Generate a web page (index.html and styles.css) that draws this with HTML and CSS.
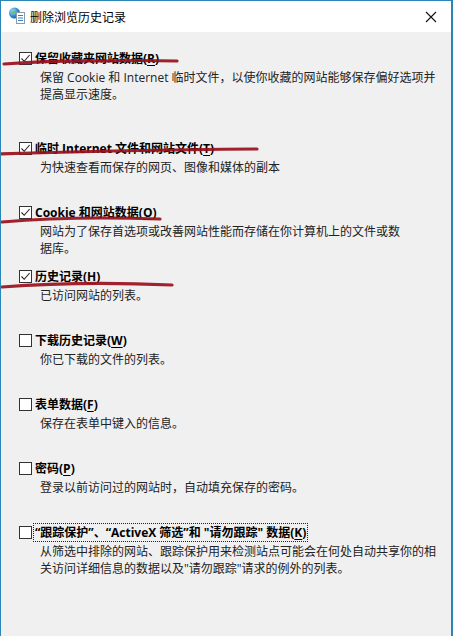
FILE: index.html
```html
<!DOCTYPE html>
<html lang="zh-CN">
<head>
<meta charset="utf-8">
<title>删除浏览历史记录</title>
<link rel="stylesheet" href="styles.css">
</head>
<body>
<div class="window">
  <div class="titlebar">
    <svg class="app-icon" width="18" height="20" viewBox="0 0 18 20">
      <defs>
        <radialGradient id="g" cx="0.35" cy="0.35" r="0.7">
          <stop offset="0" stop-color="#bfe6ff"/>
          <stop offset="0.6" stop-color="#2f8fd6"/>
          <stop offset="1" stop-color="#1b5f9e"/>
        </radialGradient>
      </defs>
      <circle cx="6.5" cy="7" r="5.5" fill="url(#g)"/>
      <path d="M3 5.5 Q6 3.5 9 6 Q7 8 4.5 8 Z" fill="#5fbf5a" opacity="0.85"/>
      <rect x="8.5" y="6.5" width="8" height="11" fill="#fff" stroke="#8a9aa8" stroke-width="1"/>
      <line x1="10" y1="9.5" x2="15" y2="9.5" stroke="#3b7fc4" stroke-width="1"/>
      <line x1="10" y1="12" x2="15" y2="12" stroke="#3b7fc4" stroke-width="1"/>
      <line x1="10" y1="14.5" x2="15" y2="14.5" stroke="#3b7fc4" stroke-width="1"/>
    </svg>
    <span class="title">删除浏览历史记录</span>
    <span class="close">
      <svg width="12" height="12" viewBox="0 0 12 12"><path d="M1 1 L11 11 M11 1 L1 11" stroke="#111" stroke-width="1.1" fill="none"/></svg>
    </span>
  </div>

  <div class="content">
    <div class="item first">
      <div class="head"><span class="box"><svg width="11" height="11" viewBox="0 0 11 11"><path d="M1.5 5.5 L4.2 8.3 L9.6 2" stroke="#222" stroke-width="1.1" fill="none"/></svg></span><span class="label">保留收藏夹网站数据(<u>R</u>)</span></div>
      <p class="desc">保留 Cookie 和 Internet 临时文件，以使你收藏的网站能够保存偏好选项并<br>提高显示速度。</p>
    </div>
    <div class="item">
      <div class="head"><span class="box"><svg width="11" height="11" viewBox="0 0 11 11"><path d="M1.5 5.5 L4.2 8.3 L9.6 2" stroke="#222" stroke-width="1.1" fill="none"/></svg></span><span class="label">临时 Internet 文件和网站文件(<u>T</u>)</span></div>
      <p class="desc">为快速查看而保存的网页、图像和媒体的副本</p>
    </div>
    <div class="item">
      <div class="head"><span class="box"><svg width="11" height="11" viewBox="0 0 11 11"><path d="M1.5 5.5 L4.2 8.3 L9.6 2" stroke="#222" stroke-width="1.1" fill="none"/></svg></span><span class="label">Cookie 和网站数据(<u>O</u>)</span></div>
      <p class="desc">网站为了保存首选项或改善网站性能而存储在你计算机上的文件或数<br>据库。</p>
    </div>
    <div class="item">
      <div class="head"><span class="box"><svg width="11" height="11" viewBox="0 0 11 11"><path d="M1.5 5.5 L4.2 8.3 L9.6 2" stroke="#222" stroke-width="1.1" fill="none"/></svg></span><span class="label">历史记录(<u>H</u>)</span></div>
      <p class="desc">已访问网站的列表。</p>
    </div>
    <div class="item">
      <div class="head"><span class="box"></span><span class="label">下载历史记录(<u>W</u>)</span></div>
      <p class="desc">你已下载的文件的列表。</p>
    </div>
    <div class="item">
      <div class="head"><span class="box"></span><span class="label">表单数据(<u>F</u>)</span></div>
      <p class="desc">保存在表单中键入的信息。</p>
    </div>
    <div class="item">
      <div class="head"><span class="box"></span><span class="label">密码(<u>P</u>)</span></div>
      <p class="desc">登录以前访问过的网站时，自动填充保存的密码。</p>
    </div>
    <div class="item">
      <div class="head"><span class="box"></span><span class="label focus">“跟踪保护”、“ActiveX 筛选”和 "请勿跟踪" 数据(<u>K</u>)</span></div>
      <p class="desc">从筛选中排除的网站、跟踪保护用来检测站点可能会在何处自动共享你的相<br>关访问详细信息的数据以及"请勿跟踪"请求的例外的列表。</p>
    </div>
  </div>

  <svg class="marks" width="453" height="636" viewBox="0 0 453 636">
    <g stroke="#9a0f1c" stroke-width="3.2" stroke-linecap="round" fill="none" opacity="0.92">
      <path d="M4 64 Q60 60 100 61 Q140 60 177 61"/>
      <path d="M0 154 Q120 150 257 149"/>
      <path d="M2 222 Q70 216 160 219"/>
      <path d="M2 287 Q80 281 172 285"/>
    </g>
  </svg>
</div>
</body>
</html>
```

FILE: styles.css
```css
* {
  box-sizing: border-box;
}

html, body {
  margin: 0;
  padding: 0;
  background: #f0f0f0;
}

body {
  font-family: "Open Sans", "Noto Sans CJK SC", sans-serif;
  font-size: 12px;
  color: #1a1a1a;
}

.window {
  position: relative;
  width: 453px;
  height: 636px;
  background: #f0f0f0;
  border-left: 1px solid #2a86b5;
  border-top: 1px solid #2a86b5;
  border-right: 2px solid #2a86b5;
  overflow: hidden;
}

.titlebar {
  height: 31px;
  background: #ffffff;
  display: flex;
  align-items: center;
  padding-left: 7px;
  padding-right: 8px;
}

.app-icon {
  flex: none;
  margin-top: -1px;
}

.title {
  margin-left: 4px;
  font-family: "Noto Sans CJK SC", sans-serif;
  font-size: 12px;
  color: #000;
  line-height: 17px;
}

.close {
  margin-left: auto;
  display: flex;
  align-items: center;
  justify-content: center;
  width: 20px;
  height: 20px;
  margin-right: 2px;
}

.content {
  padding-top: 18px;
}

.item {
  height: 64px;
}

.item.first {
  height: 90px;
}

.head {
  display: flex;
  align-items: center;
  height: 17px;
  padding-left: 18px;
}

.box {
  flex: none;
  width: 13px;
  height: 13px;
  border: 1px solid #333;
  background: #fff;
  display: flex;
  align-items: center;
  justify-content: center;
}

.label {
  margin-left: 3px;
  font-weight: 700;
  color: #000;
  line-height: 17px;
  white-space: nowrap;
}

.label u {
  text-decoration-thickness: 1px;
  text-underline-offset: 2px;
}

.label.focus {
  outline: 1px dotted #222;
  outline-offset: 0;
  padding: 0 1px;
  margin-left: 2px;
}

.desc {
  margin: 2px 0 0 0;
  padding-left: 39px;
  line-height: 17px;
  color: #222;
  white-space: nowrap;
}

.marks {
  position: absolute;
  left: -1px;
  top: -1px;
  pointer-events: none;
}
```
